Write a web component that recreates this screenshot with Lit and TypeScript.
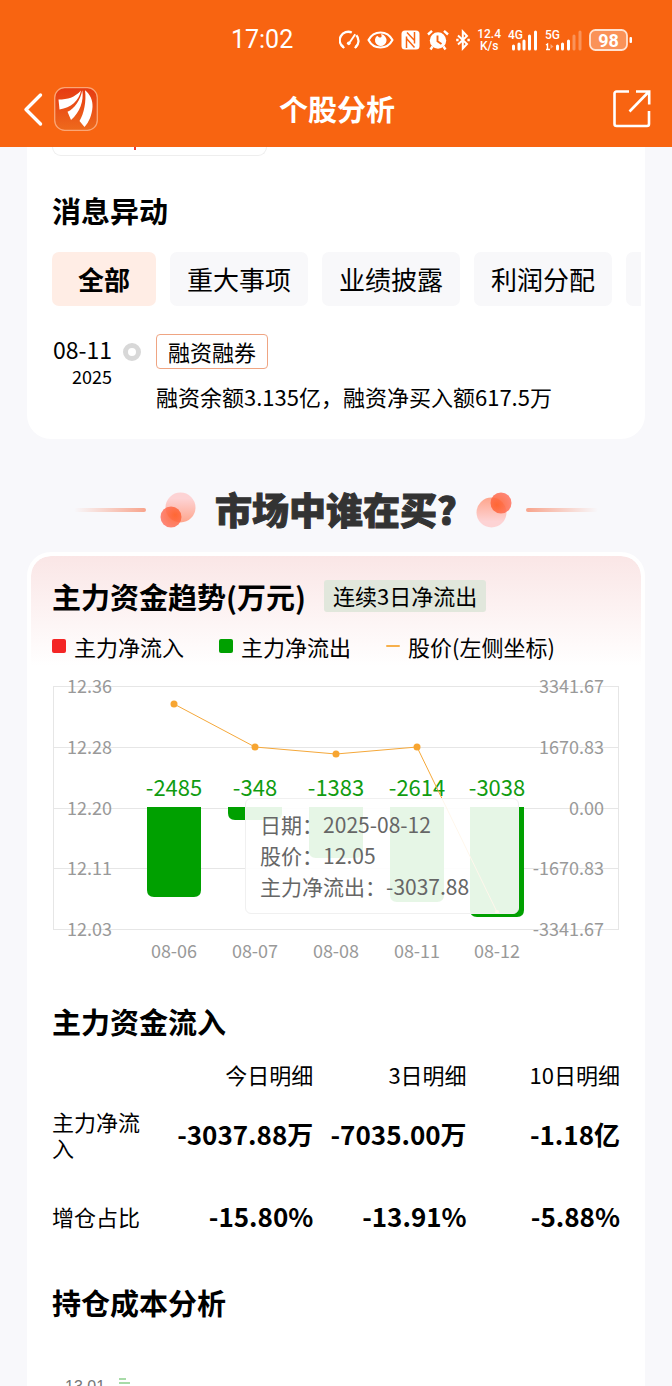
import { LitElement, html, svg, css } from "lit";
import { customElement, property, state } from "lit/decorators.js";
import { classMap } from "lit/directives/class-map.js";

interface Day {
  date: string;
  label: string;
  x: number;
  bottom: number;
  priceY: number;
}

const DAYS: Day[] = [
  { date: "08-06", label: "-2485", x: 122, bottom: 221, priceY: 28 },
  { date: "08-07", label: "-348", x: 203, bottom: 144, priceY: 71 },
  { date: "08-08", label: "-1383", x: 284, bottom: 182, priceY: 78 },
  { date: "08-11", label: "-2614", x: 365, bottom: 226, priceY: 71 },
  { date: "08-12", label: "-3038", x: 445, bottom: 241, priceY: 236 },
];

const GRID = [
  { y: 10, left: "12.36", right: "3341.67" },
  { y: 71, left: "12.28", right: "1670.83" },
  { y: 132, left: "12.20", right: "0.00" },
  { y: 192, left: "12.11", right: "-1670.83" },
  { y: 253, left: "12.03", right: "-3341.67" },
];

@customElement("status-bar")
class StatusBar extends LitElement {
  static styles = css`
    :host { display: block; }
    .bar {
      display: flex; align-items: center; justify-content: flex-end;
      height: 64px; padding: 8px 40px 0 0; color: #fff;
      font-family: Roboto, "Noto Sans CJK SC", sans-serif;
    }
    .time { font-size: 25px; line-height: 32px; margin-right: 46px; }
    .icons { display: flex; align-items: center; gap: 7px; }
    svg { display: block; }
    .speed { display: grid; font-size: 12px; line-height: 12px; text-align: center; font-weight: 500; }
    .signal text { font: 500 12px Roboto, sans-serif; fill: #fff; }
    .battery text { font: 700 18px Roboto, sans-serif; fill: #fff; }
  `;

  render() {
    return html`
      <div class="bar">
        <span class="time">17:02</span>
        <div class="icons">
          <svg width="21" height="21" viewBox="0 0 22 22" fill="none" stroke="#fff" stroke-width="2.4">
            <path d="M4.6 18.2A9 9 0 0 1 13.4 2.6M18.2 5.6A9 9 0 0 1 17.4 18.2" />
            <path d="M3 15.6l2.4 3.4M19 15.6l-2.4 3.4" stroke-width="2" />
            <path d="M10.6 13.8L17 4.4" stroke-width="2" /><circle cx="10.2" cy="14" r="1.9" fill="#fff" stroke="none" />
          </svg>
          <svg width="27" height="20" viewBox="0 0 28 20" fill="none" stroke="#fff" stroke-width="2.2">
            <path d="M1.6 10C7-.4 21-.4 26.400 10C21 20.400 7 20.400 1.600 10Z" />
            <path d="M10.500 5.500A6 6 0 1 0 19 6.500A6 6 0 0 0 14.500 3.800C16.200 6.500 14.500 9.500 10.500 5.500Z" fill="#fff" stroke="none" />
          </svg>
          <svg width="19" height="20" viewBox="0 0 19 20">
            <rect x="0.500" y="0.500" width="18" height="19" rx="3.500" fill="#fff" />
            <path d="M5.500 18V6.500M13.500 2v11.500M6 2.500l7.500 8M5.500 8.500l8 9" fill="none" stroke="#f86411" stroke-width="1.500" />
          </svg>
          <svg width="22" height="22" viewBox="0 0 22 22">
            <circle cx="11" cy="11.500" r="8.200" fill="#fff" />
            <path d="M1 5.500L5 1.800M21 5.500L17 1.800M5.500 17.500L3.500 20.500M16.500 17.500l2 3" stroke="#fff" stroke-width="2.400" />
            <path d="M10.500 6.500v5.800l4 2.700" fill="none" stroke="#f86411" stroke-width="1.900" />
          </svg>
          <svg width="14" height="22" viewBox="0 0 14 22" fill="none" stroke="#fff" stroke-width="2">
            <path d="M2 6.500l9 8.500-4.200 4.500V2.500L11 7l-9 8.500" />
            <path d="M.2 11h2.400M11.400 11h2.400" stroke-width="2.400" />
          </svg>
          <span class="speed"><span>12.4</span><span>K/s</span></span>
          <svg class="signal" width="30" height="22" viewBox="0 0 30 22">
            <text x="0" y="10">4G</text>
            <path d="M5.500 20v-3M11 20v-5M16 20v-8M21.500 20V7M27.500 20V3" stroke="#fff" stroke-width="3" stroke-linecap="round" />
          </svg>
          <svg class="signal" width="37" height="22" viewBox="0 0 37 22">
            <text x="0" y="10">5G</text>
            <path d="M1 16l1.500-1v6M1 20.500h4" stroke="#fff" stroke-width="1.400" fill="none" />
            <path d="M5.500 15l3 2.500-3 2.500z" fill="#fff" opacity="0.400" />
            <path d="M12.500 20v-3M17.500 20v-5M23.500 20v-8" stroke="#fff" stroke-width="3" stroke-linecap="round" />
            <path d="M29 20V7M35 20V3" stroke="#fff" stroke-width="3" stroke-linecap="round" opacity="0.300" />
          </svg>
          <svg class="battery" width="43" height="22" viewBox="0 0 43 22">
            <rect x="1" y="1" width="37" height="20" rx="5.500" fill="#fff" fill-opacity="0.300" stroke="#ffe3d2" stroke-width="1.800" />
            <rect x="40.500" y="8" width="2.500" height="6" rx="1" fill="#fff" />
            <text x="19.500" y="17.500" text-anchor="middle">98</text>
          </svg>
        </div>
      </div>
    `;
  }
}

@customElement("nav-bar")
class NavBar extends LitElement {
  @property() heading = "";

  static styles = css`
    :host { display: block; }
    .bar {
      display: grid; grid-template-columns: 1fr auto 1fr; align-items: center;
      height: 73px; padding: 0 20px 2px 22px; color: #fff;
    }
    .left { display: flex; align-items: center; gap: 8px; }
    .right { display: flex; justify-content: flex-end; }
    button { display: block; border: 0; padding: 0; background: none; }
    svg { display: block; }
    h1 { margin: 0; padding-bottom: 2px; font-size: 29px; line-height: 40px; font-weight: 700; }
  `;

  render() {
    return html`
      <div class="bar">
        <div class="left">
          <button aria-label="返回">
            <svg width="24" height="40" viewBox="0 0 24 40" fill="none" stroke="#fff" stroke-width="3.400" stroke-linecap="round" stroke-linejoin="round">
              <path d="M18.500 6L4 20.500L18.500 35" />
            </svg>
          </button>
          <button aria-label="首页">
            <svg width="44" height="44" viewBox="0 0 44 44">
              <defs>
                <linearGradient id="logo" x1="0" y1="0" x2="0" y2="1">
                  <stop offset="0" stop-color="#e63a12" /><stop offset="1" stop-color="#ee6a1c" />
                </linearGradient>
              </defs>
              <rect x="0.700" y="0.700" width="42.600" height="42.600" rx="10" fill="url(#logo)" stroke="#fba676" stroke-width="1.300" />
              <path d="M4.500 12.500C14 12.500 20.500 10.500 27 3.500C25 14 17 20.500 5.500 22.500Z" fill="#fff" />
              <path d="M28.300 3.200C30 14 26 25 17 33L13.500 24.800C20.500 21.500 26.500 13 28.300 3.200Z" fill="#fff" />
              <path d="M31 3.200C36 7 39 13 38.500 20C38 28 35 35 30.500 40L25.500 34C30 26.500 32.500 14.500 31 3.200Z" fill="#fff" />
            </svg>
          </button>
        </div>
        <h1>${this.heading}</h1>
        <div class="right">
          <button aria-label="分享">
            <svg width="40" height="40" viewBox="0 0 40 40" fill="none" stroke="#fff" stroke-width="2.600">
              <path d="M17 2.500H4.500a2 2 0 0 0-2 2V35a2 2 0 0 0 2 2H35a2 2 0 0 0 2-2V22" />
              <path d="M24 2.500H37.200V15.500M36.500 3L17.500 22.500" />
            </svg>
          </button>
        </div>
      </div>
    `;
  }
}

@customElement("news-card")
class NewsCard extends LitElement {
  @state() private active = 0;
  private tabs = ["全部", "重大事项", "业绩披露", "利润分配", "增减持"];

  static styles = css`
    :host { display: block; background: #fff; border-radius: 0 0 24px 24px; padding: 0 4px 0 25px; }
    .previous {
      box-sizing: border-box; width: 215px; height: 9px;
      border: 1px solid #eeeeee; border-top: 0; border-radius: 0 0 14px 14px;
    }
    .previous i { display: block; width: 2px; height: 3px; margin-left: 81px; background: #ee3b33; }
    h2 { margin: 0; padding: 34px 0 22px; font-size: 29px; line-height: 40px; font-weight: 700; }
    .tabs { display: flex; gap: 14px; overflow: hidden; }
    .tab {
      flex: none; height: 54px; padding: 0 17px; border: 0; border-radius: 7px;
      background: #f8f8fa; color: #000; font: inherit; font-size: 26px; line-height: 54px;
    }
    .tab.on { padding: 0 26px; background: #ffede5; font-weight: 700; }
    .entry { display: flex; padding: 28px 0 27px; }
    time { display: grid; width: 60px; text-align: right; align-content: start; }
    .day { font-size: 23px; line-height: 30px; }
    .year { font-size: 18px; line-height: 24px; }
    .dot {
      box-sizing: border-box; flex: none; width: 18px; height: 18px; margin: 9px 15px 0 11px;
      border: 5px solid #d8d8d8; border-radius: 50%;
    }
    .body { font-size: 22px; }
    .tag {
      display: block; box-sizing: border-box; width: max-content; height: 35px; padding: 0 11px;
      border: 1px solid #efa583; border-radius: 4px; line-height: 32px; color: #000; text-decoration: none;
    }
    p { margin: 0; padding-top: 11px; line-height: 32px; }
  `;

  render() {
    return html`
      <div class="previous"><i></i></div>
      <h2>消息异动</h2>
      <div class="tabs">
        ${this.tabs.map((t, i) => html`
          <button class=${classMap({ tab: true, on: i === this.active })} @click=${() => (this.active = i)}>${t}</button>
        `)}
      </div>
      <div class="entry">
        <time datetime="2025-08-11"><span class="day">08-11</span><span class="year">2025</span></time>
        <span class="dot"></span>
        <div class="body">
          <a class="tag" href="#">融资融券</a>
          <p>融资余额3.135亿，融资净买入额617.5万</p>
        </div>
      </div>
    `;
  }
}

@customElement("section-banner")
class SectionBanner extends LitElement {
  @property() heading = "";

  static styles = css`
    :host { display: flex; align-items: center; justify-content: center; height: 85px; padding-top: 28px; }
    .line { width: 72px; height: 4px; border-radius: 2px; background: linear-gradient(90deg, #f8b09a00, #f8a48c); }
    .line.after { background: linear-gradient(270deg, #f8b09a00, #f8a48c); }
    svg { display: block; margin: 0 14px; }
    .balls.after { transform: rotate(180deg); }
    h2 {
      margin: 0 5px; padding-bottom: 2px; color: #333; font-size: 37px; line-height: 54px; font-weight: 900;
      -webkit-text-stroke: 1px #333; white-space: nowrap;
    }
  `;

  private balls(after: boolean) {
    return html`
      <svg class=${classMap({ balls: true, after })} width="36" height="36" viewBox="0 0 36 36">
        <defs>
          <linearGradient id="pale" x1="0" y1="0" x2="0" y2="1">
            <stop offset="0.200" stop-color="#fdd3d4" /><stop offset="1" stop-color="#fea58c" />
          </linearGradient>
          <radialGradient id="hot" cx="0.700" cy="0.400" r="0.700">
            <stop offset="0" stop-color="#ff5a20" /><stop offset="1" stop-color="#ff7260" />
          </radialGradient>
        </defs>
        <circle cx="20.500" cy="15.500" r="15" fill="url(#pale)" />
        <circle cx="11" cy="25" r="10.500" fill="url(#hot)" opacity="0.850" />
      </svg>
    `;
  }

  render() {
    return html`
      <span class="line"></span>
      ${this.balls(false)}
      <h2>${this.heading}</h2>
      ${this.balls(true)}
      <span class="line after"></span>
    `;
  }
}

@customElement("flow-chart")
class FlowChart extends LitElement {
  static styles = css`
    :host { display: block; position: relative; }
    svg { display: block; width: 100%; height: auto; }
    text { font-family: "Noto Sans CJK SC", sans-serif; }
    .grid { stroke: #e6e6e6; stroke-width: 1; fill: none; }
    .axis { font-size: 18px; fill: #999; }
    .end { text-anchor: end; }
    .mid { text-anchor: middle; }
    .bar { fill: #00a000; }
    .value { font-size: 22px; fill: #109c10; }
    .price { fill: none; stroke: #f5a83a; stroke-width: 1; }
    .point { fill: #f7a531; }
    .tip {
      position: absolute; left: 34%; top: 42%; box-sizing: border-box; width: 48.300%;
      padding: 10px 14px 11px; border: 1px solid #f0f0f0; border-radius: 6px;
      background: rgba(255, 255, 255, 0.9); color: #666; font-size: 21px; line-height: 31px; white-space: nowrap;
    }
  `;

  private bar(d: Day) {
    const l = d.x - 27;
    const r = d.x + 27;
    return svg`<path class="bar" d="M${l} 131H${r}V${d.bottom - 7}Q${r} ${d.bottom} ${r - 7} ${d.bottom}H${l + 7}Q${l} ${d.bottom} ${l} ${d.bottom - 7}Z" />`;
  }

  render() {
    return html`
      <svg viewBox="0 0 568 290" role="img" aria-label="主力资金趋势">
        ${GRID.map((g) => svg`<line class="grid" x1="1" x2="567" y1=${g.y + 0.5} y2=${g.y + 0.5} />`)}
        <path class="grid" d="M1.500 10V253M566.500 10V253" />
        ${DAYS.map((d) => this.bar(d))}
        ${GRID.map((g) => svg`
          <text class="axis" x="15" y=${g.y + 7}>${g.left}</text>
          <text class="axis end" x="552" y=${g.y + 7}>${g.right}</text>
        `)}
        ${DAYS.map((d) => svg`
          <text class="value mid" x=${d.x} y="120">${d.label}</text>
          <text class="axis mid" x=${d.x} y="282">${d.date}</text>
        `)}
        <polyline class="price" points=${DAYS.map((d) => `${d.x},${d.priceY}`).join(" ")} />
        ${DAYS.map((d, i) => svg`<circle class="point" cx=${d.x} cy=${d.priceY} r=${i === DAYS.length - 1 ? 2 : 3.5} />`)}
      </svg>
      <div class="tip">
        <div>日期：2025-08-12</div>
        <div>股价：12.05</div>
        <div>主力净流出：-3037.88</div>
      </div>
    `;
  }
}

@customElement("flow-card")
class FlowCard extends LitElement {
  static styles = css`
    :host {
      display: block; border: 4px solid #fff; border-bottom: 0; border-radius: 24px 24px 0 0;
      padding: 0 21px; background: linear-gradient(#fae6e6, #fff 110px) padding-box, #fff border-box;
    }
    .title { display: flex; align-items: center; gap: 18px; padding-top: 20px; }
    h2 { margin: 0; font-size: 29px; line-height: 40px; font-weight: 700; }
    .badge { padding: 0 9px 2px; border-radius: 3px; background: #e1e7dc; font-size: 22px; line-height: 30px; }
    .legend { display: flex; gap: 35px; padding: 14px 0; font-size: 22px; line-height: 32px; }
    .legend span { display: flex; align-items: center; gap: 8px; }
    .legend i { width: 14px; height: 14px; border-radius: 2px; }
    .in { background: #f42525; }
    .out { background: #00a000; }
    .legend .line { height: 2px; background: #f7b04c; }
    .sub { padding-top: 35px; }
    table { width: 100%; border-collapse: collapse; table-layout: fixed; }
    col.name { width: 19%; }
    th, td { padding: 0; text-align: right; vertical-align: middle; }
    th { font-size: 22px; line-height: 26px; font-weight: 400; }
    thead th { height: 66px; }
    tbody th { text-align: left; }
    tbody th span { display: block; width: 88px; }
    .amount { height: 54px; }
    .ratio { height: 110px; }
    td { font-size: 26px; line-height: 36px; font-weight: 700; white-space: nowrap; }
    .cost { padding-top: 11px; }
    .peek { display: flex; gap: 14px; padding: 56px 0 0 13px; }
    .peek b { font: 16px/18px "Liberation Sans", sans-serif; color: #777; }
    .ticks { display: grid; align-content: start; gap: 2px; }
    .ticks i { height: 2px; background: #a8dba8; }
    .t1 { width: 7px; }
    .t2 { width: 11px; }
    .t3 { width: 19px; }
  `;

  render() {
    return html`
      <div class="title"><h2>主力资金趋势(万元)</h2><span class="badge">连续3日净流出</span></div>
      <div class="legend">
        <span><i class="in"></i>主力净流入</span>
        <span><i class="out"></i>主力净流出</span>
        <span><i class="line"></i>股价(左侧坐标)</span>
      </div>
      <flow-chart></flow-chart>
      <h2 class="sub">主力资金流入</h2>
      <table>
        <colgroup><col class="name" /><col /><col /><col /></colgroup>
        <thead><tr><th></th><th scope="col">今日明细</th><th scope="col">3日明细</th><th scope="col">10日明细</th></tr></thead>
        <tbody>
          <tr class="amount"><th scope="row"><span>主力净流入</span></th><td>-3037.88万</td><td>-7035.00万</td><td>-1.18亿</td></tr>
          <tr class="ratio"><th scope="row"><span>增仓占比</span></th><td>-15.80%</td><td>-13.91%</td><td>-5.88%</td></tr>
        </tbody>
      </table>
      <h2 class="cost">持仓成本分析</h2>
      <div class="peek"><b>13.01</b><div class="ticks"><i class="t1"></i><i class="t2"></i><i class="t3"></i></div></div>
    `;
  }
}

@customElement("app-root")
class AppRoot extends LitElement {
  static styles = css`
    :host {
      display: flex; flex-direction: column; height: 100vh; overflow: hidden;
      background: #f8f8fb; color: #000; font-family: "Noto Sans CJK SC", sans-serif;
    }
    header { flex: none; background: #f86411; }
    main { flex: 1; min-height: 0; overflow: hidden; padding: 0 27px; }
  `;

  render() {
    return html`
      <header>
        <status-bar></status-bar>
        <nav-bar heading="个股分析"></nav-bar>
      </header>
      <main>
        <news-card></news-card>
        <section-banner heading="市场中谁在买?"></section-banner>
        <flow-card></flow-card>
      </main>
    `;
  }
}
